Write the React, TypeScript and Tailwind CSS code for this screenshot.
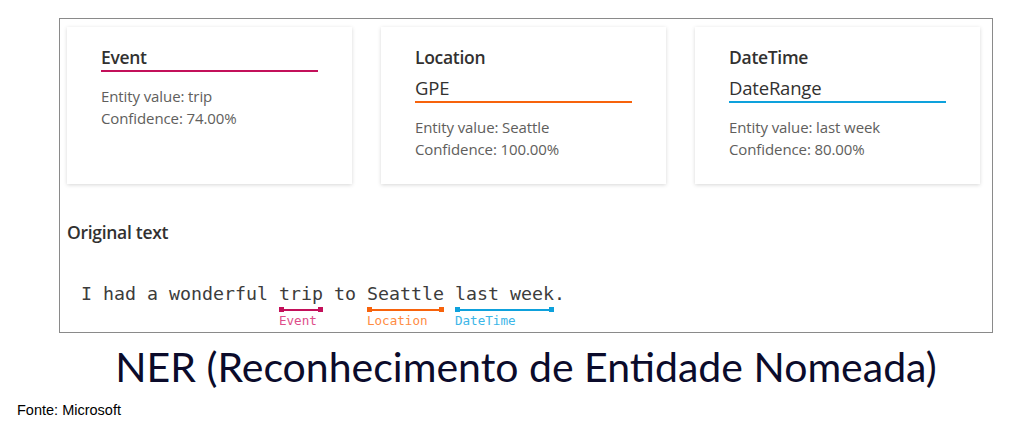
import React from "react";

type Card = {
  title: string;
  sub?: string;
  color: string;
  value: string;
  conf: string;
};

const cards: Card[] = [
  { title: "Event", color: "bg-[#c3105a]", value: "trip", conf: "74.00%" },
  { title: "Location", sub: "GPE", color: "bg-[#f7630c]", value: "Seattle", conf: "100.00%" },
  { title: "DateTime", sub: "DateRange", color: "bg-[#0ea1dc]", value: "last week", conf: "80.00%" },
];

function EntityCard({ c }: { c: Card }) {
  return (
    <div className="w-[285px] h-[157px] bg-white shadow-[0_1px_4px_rgba(0,0,0,0.16)] pl-[34px] pr-[34px] pt-[18px] font-['Open_Sans',sans-serif]">
      <div className="text-[17.5px] leading-[24px] font-semibold text-[#323130] tracking-[-0.3px]">{c.title}</div>
      {c.sub && (
        <div className="mt-[7px] text-[18.5px] leading-[24px] text-[#323130] tracking-[-0.2px]">{c.sub}</div>
      )}
      <div className={`h-[2px] w-full mt-[1px] ${c.color}`} />
      <div className="mt-[13px] text-[15px] leading-[22px] text-[#605e5c] tracking-[-0.1px]">
        <div>Entity value: {c.value}</div>
        <div>Confidence: {c.conf}</div>
      </div>
    </div>
  );
}

function Ent({
  word,
  bar,
  label,
  labelColor,
}: {
  word: string;
  bar: string;
  label: string;
  labelColor: string;
}) {
  return (
    <span className="inline-flex flex-col align-baseline">
      <span>{word}</span>
      <span className="flex items-center h-[5px] mt-[1px]">
        <span className={`w-[5px] h-[5px] ${bar}`} />
        <span className={`flex-1 h-[2px] ${bar}`} />
        <span className={`w-[5px] h-[5px] ${bar}`} />
      </span>
      <span className={`text-[12.6px] leading-[16px] mt-[1px] font-medium ${labelColor}`}>{label}</span>
    </span>
  );
}

export default function App() {
  return (
    <div className="w-[1024px] h-[432px] bg-white overflow-hidden">
      <div className="ml-[59px] mt-[18px] w-[934px] h-[315px] border border-[#8a8a8a]">
        <div className="flex gap-[29px] pl-[7px] pt-[8px]">
          {cards.map((c) => (
            <EntityCard key={c.title} c={c} />
          ))}
        </div>
        <div className="ml-[7px] mt-[36px] text-[17.5px] leading-[24px] font-semibold text-[#323130] font-['Open_Sans',sans-serif] tracking-[-0.3px]">
          Original text
        </div>
        <div className="ml-[21px] mt-[38px] text-[18.27px] leading-[24px] text-[#3c3c3c] font-['DejaVu_Sans_Mono',monospace] whitespace-pre">
          <span>I had a wonderful </span>
          <Ent word="trip" bar="bg-[#c3105a]" label="Event" labelColor="text-[#de4d8a]" />
          <span> to </span>
          <Ent word="Seattle" bar="bg-[#f7630c]" label="Location" labelColor="text-[#ff8c42]" />
          <span> </span>
          <Ent word="last week" bar="bg-[#0ea1dc]" label="DateTime" labelColor="text-[#3cb6e8]" />
          <span>.</span>
        </div>
      </div>
      <div className="ml-[59px] w-[934px] text-center mt-[8px] text-[41px] leading-[52px] text-[#0b0b2b] font-['Lato',sans-serif]">
        NER (Reconhecimento de Entidade Nomeada)
      </div>
      <div className="ml-[17px] mt-[8px] text-[14.5px] leading-[18px] text-black font-['Liberation_Sans',sans-serif] tracking-[0px]">
        Fonte: Microsoft
      </div>
    </div>
  );
}
